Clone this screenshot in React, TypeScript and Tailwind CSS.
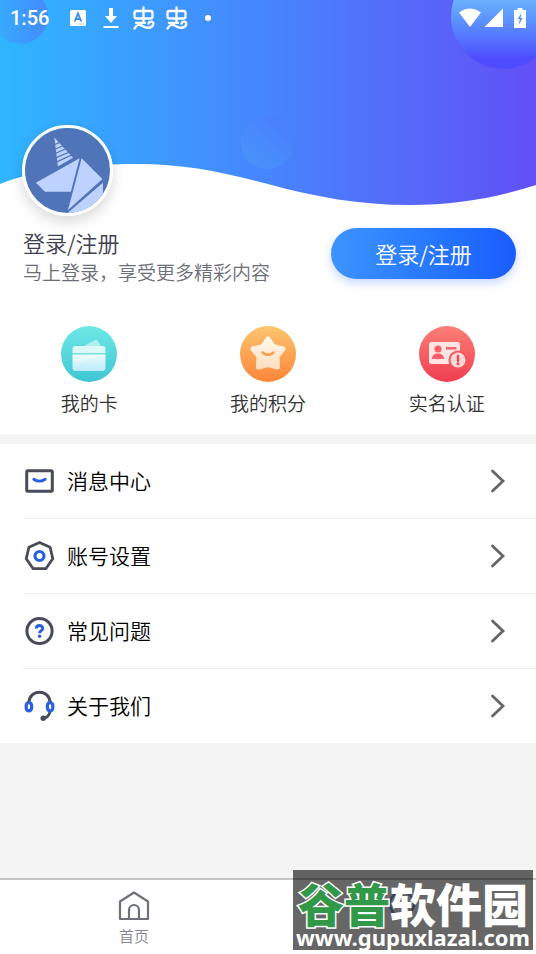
import type { ReactNode } from "react";

type Item = { label: string; icon: ReactNode };

const shortcuts: Item[] = [
  { label: "我的卡", icon: <CardIcon /> },
  { label: "我的积分", icon: <StarIcon /> },
  { label: "实名认证", icon: <IdentityIcon /> },
];

const menu: Item[] = [
  { label: "消息中心", icon: <MessageIcon /> },
  { label: "账号设置", icon: <SettingsIcon /> },
  { label: "常见问题", icon: <HelpIcon /> },
  { label: "关于我们", icon: <HeadsetIcon /> },
];

function CardIcon() {
  return (
    <svg className="w-14 h-14" viewBox="0 0 56 56" aria-hidden="true">
      <defs>
        <linearGradient id="cardBg" x1="0" y1="0" x2="0" y2="1">
          <stop offset="0" stopColor="#6fe8e5" />
          <stop offset="1" stopColor="#3fc6d4" />
        </linearGradient>
        <linearGradient id="cardFace" x1="0" y1="0" x2="0" y2="1">
          <stop offset="0" stopColor="#e6fcfa" />
          <stop offset="1" stopColor="#bdebfc" />
        </linearGradient>
      </defs>
      <circle cx="28" cy="28" r="28" fill="url(#cardBg)" />
      <path d="M23 20 34.5 13.8q1-.5 1.700.4L40 20Z" fill="#aef0ee" />
      <path d="M14.500 20h27a3 3 0 0 1 3 3v4.200h-33V23a3 3 0 0 1 3-3Z" fill="#dcf9f7" />
      <path d="M11.500 28.500h33V42a3 3 0 0 1-3 3h-27a3 3 0 0 1-3-3Z" fill="url(#cardFace)" />
      <path d="M11.500 36c10 1 20-6 33-6v-1.500h-33Z" fill="#fff" opacity=".3" />
    </svg>
  );
}

function StarIcon() {
  return (
    <svg className="w-14 h-14" viewBox="0 0 56 56" aria-hidden="true">
      <defs>
        <linearGradient id="starBg" x1="0" y1="0" x2="0" y2="1">
          <stop offset="0" stopColor="#fdc56f" />
          <stop offset="1" stopColor="#fb8539" />
        </linearGradient>
        <linearGradient id="starFace" x1="0" y1="0" x2="0" y2="1">
          <stop offset="0" stopColor="#fff8ec" />
          <stop offset="1" stopColor="#ffdfc0" />
        </linearGradient>
      </defs>
      <circle cx="28" cy="28" r="28" fill="url(#starBg)" />
      <path
        d="M28 13 33 20.500 43 23 37 30.500 37.500 41 28 38.500 18.500 41 19 30.500 13 23 23 20.500Z"
        fill="url(#starFace)"
        stroke="url(#starFace)"
        strokeWidth="5"
        strokeLinejoin="round"
      />
      <path d="M22.500 26.500q5.500 4.500 11 0" fill="none" stroke="#fb9a45" strokeWidth="2.500" strokeLinecap="round" />
    </svg>
  );
}

function IdentityIcon() {
  return (
    <svg className="w-14 h-14" viewBox="0 0 56 56" aria-hidden="true">
      <defs>
        <linearGradient id="idBg" x1="0" y1="0" x2="0" y2="1">
          <stop offset="0" stopColor="#fb7f76" />
          <stop offset="1" stopColor="#f03e50" />
        </linearGradient>
      </defs>
      <circle cx="28" cy="28" r="28" fill="url(#idBg)" />
      <rect x="10" y="16" width="31" height="22" rx="2.500" fill="#ffe6e3" />
      <circle cx="19" cy="23" r="3.600" fill="#f7606a" />
      <path d="M13 33c0-4 2.600-5.500 6-5.500s6 1.500 6 5.500Z" fill="#f7606a" />
      <path d="M27 22.300h10.500" stroke="#f7606a" strokeWidth="2.500" />
      <circle cx="39" cy="34" r="9.500" fill="#f55660" />
      <circle cx="39" cy="34" r="7.500" fill="#ffd9d6" />
      <path d="M39 30v5" stroke="#f24a58" strokeWidth="2.500" strokeLinecap="round" />
      <circle cx="39" cy="38" r="1.400" fill="#f24a58" />
    </svg>
  );
}

function MessageIcon() {
  return (
    <svg className="w-8 h-8" viewBox="0 0 32 32" fill="none" aria-hidden="true">
      <rect x="3.700" y="5.700" width="25.600" height="20.600" rx="1" stroke="#484c5a" strokeWidth="3" />
      <path d="M10.800 14.200q5.700 3.800 11.400 0" stroke="#2860e0" strokeWidth="2.900" strokeLinecap="round" />
    </svg>
  );
}

function SettingsIcon() {
  return (
    <svg className="w-8 h-8" viewBox="0 0 32 32" fill="none" aria-hidden="true">
      <path
        d="M16.500 2.500 27.100 7.300 29.800 18.800 22.800 28.700H10.200L3.200 18.800 5.900 7.300Z"
        stroke="#484c5a"
        strokeWidth="2.800"
        strokeLinejoin="round"
      />
      <circle cx="16.500" cy="16" r="4.500" stroke="#2860e0" strokeWidth="3.200" />
    </svg>
  );
}

function HelpIcon() {
  return (
    <svg className="w-8 h-8" viewBox="0 0 32 32" fill="none" aria-hidden="true">
      <circle cx="16.500" cy="16" r="12.600" stroke="#484c5a" strokeWidth="3" />
      <path
        d="M13.300 13.600c0-4 6.400-4 6.400-.2 0 2.300-3.100 2.300-3.100 4.800"
        stroke="#2860e0"
        strokeWidth="3"
      />
      <circle cx="16.600" cy="21.300" r="1.700" fill="#2860e0" />
    </svg>
  );
}

function HeadsetIcon() {
  return (
    <svg className="w-8 h-8" viewBox="0 0 32 32" fill="none" aria-hidden="true">
      <path d="M5.800 13C6.300-1.500 26.700-1.500 27.200 13" stroke="#484c5a" strokeWidth="3" />
      <path d="M27.200 21c-.8 4-3 6.500-6.500 7.500" stroke="#484c5a" strokeWidth="2.800" />
      <circle cx="20.200" cy="28.300" r="2.700" fill="#484c5a" />
      <rect x="3.200" y="12.600" width="5.400" height="8.200" rx="2.700" stroke="#2860e0" strokeWidth="3.200" />
      <rect x="24.400" y="12.600" width="5.400" height="8.200" rx="2.700" stroke="#2860e0" strokeWidth="3.200" />
    </svg>
  );
}

function Chevron() {
  return (
    <svg className="w-4 h-6" viewBox="0 0 16 24" fill="none" aria-hidden="true">
      <path d="m2.500 2 10.500 10L2.500 22" stroke="#666" strokeWidth="2.800" strokeLinecap="round" />
    </svg>
  );
}

function Unicorn() {
  return (
    <svg className="w-full h-full" viewBox="0 0 84 84" aria-hidden="true">
      <rect width="84" height="84" fill="#5074b8" />
      <g fill="#bed2ff">
        <path d="M29 9.500 47.500 29.500 32.500 38Z" />
        <path d="M54 30 45.300 63H19.700L10.700 54Z" />
        <path d="M56 30 76.500 50.500 42.500 81Z" />
        <path d="M77 54v13L68 84H42Z" />
      </g>
      <path
        d="m27 17.500 9-4M27 22l14-6M27 26.500l18-8M27 31l22-9.500M27 35.500l24-11"
        stroke="#5074b8"
        strokeWidth="1.200"
      />
    </svg>
  );
}

// notification glyph, shown twice in the status bar
function BugGlyph() {
  return (
    <svg className="w-6 h-6" viewBox="0 0 24 24" fill="none" stroke="#fff" strokeWidth="2.300" strokeLinecap="round" aria-hidden="true">
      <rect x="2.500" y="5" width="18" height="7.500" rx="2" />
      <path d="M11.500 1.500v15M4 16.800h9M2.500 22.500c2-4 5-4.500 8-2.500s9 3 10.500-1-4-4.500-4.500-1.300" />
    </svg>
  );
}

function StatusBar() {
  return (
    <div className="relative flex items-center justify-between h-9 px-[10px]">
      <div className="flex items-center">
        <span className="w-[60px] font-['Roboto',sans-serif] text-[20px] font-medium text-white">1:56</span>
        <svg className="w-4 h-4" viewBox="0 0 16 16" aria-hidden="true">
          <rect width="16" height="16" rx="1.500" fill="#fff" />
          <path d="m4.700 11.500 3.300-8 3.300 8M5.900 9h4.200" fill="none" stroke="#408fef" strokeWidth="1.900" />
          <path d="M8 14h6" stroke="#a8cdfa" strokeWidth="1" />
        </svg>
        <svg className="w-4 h-6 ml-[17px]" viewBox="0 0 16 24" fill="#fff" aria-hidden="true">
          <path d="M6 2h4v8h4l-6 7-6-7h4ZM.500 20h15v2H.500Z" />
        </svg>
        <span className="ml-[13px] flex gap-[9px]">
          <BugGlyph />
          <BugGlyph />
        </span>
        <span className="ml-4 w-[6px] h-[6px] rounded-full bg-white" />
      </div>
      <div className="flex items-center">
        <svg className="w-6 h-5" viewBox="0 0 24 20" fill="#fff" aria-hidden="true">
          <path d="M1 4.500Q12-3.500 23 4.500L12 19Z" />
        </svg>
        <svg className="w-5 h-5 ml-[2px]" viewBox="0 0 20 20" fill="#fff" aria-hidden="true">
          <path d="M19 .500V19H.500Z" />
        </svg>
        <svg className="w-3 h-5 ml-[10px]" viewBox="0 0 12 20" aria-hidden="true">
          <path d="M3.500 0h5v2H12v18H0V2h3.500Z" fill="#fff" />
          <path d="M7.500 5 3.500 11h2.300L4.700 17l4-7H6.500Z" fill="#5b94f5" />
        </svg>
      </div>
    </div>
  );
}

function Banner() {
  return (
    <header className="relative pb-1">
      <div className="absolute inset-x-0 top-0 h-[206px] overflow-hidden">
        <svg className="w-full h-full" viewBox="0 0 536 206" preserveAspectRatio="none" aria-hidden="true">
          <defs>
            <linearGradient id="sky" x1="0" y1="0" x2="1" y2="0">
              <stop offset="0" stopColor="#2fb6ff" />
              <stop offset=".5" stopColor="#4785fd" />
              <stop offset="1" stopColor="#6250f6" />
            </linearGradient>
          </defs>
          <path
            d="M0 0H536V185C495 198 455 205 410 205C360 205 315 197 268 184C222 172 185 164 137 164C88 164 38 169 0 184Z"
            fill="url(#sky)"
          />
        </svg>
        <div className="absolute -left-2 -top-3 w-14 h-14 rounded-full bg-linear-to-r from-[#34affe] to-[#4489fb]" />
        <div className="absolute -right-5 -top-9 w-[105px] h-[105px] rounded-full bg-linear-to-b from-[#70c0ff] from-25% to-[#4f4bff] to-90%" />
        <div className="absolute left-[45%] top-[116px] w-[53px] h-[53px] rounded-full bg-linear-to-tr from-[#4796fb] to-[#4a7bfc]" />
      </div>
      <StatusBar />
      <div className="relative ml-[22px] mt-[89px] w-[91px] h-[91px] rounded-full border-[3px] border-white overflow-hidden shadow-[0_6px_14px_rgba(0,0,0,0.15)]">
        <Unicorn />
      </div>
    </header>
  );
}

function Watermark() {
  return (
    <div className="absolute right-[3px] bottom-1 w-[240px] h-[80px] bg-black/60 text-white">
      <div className="flex justify-center pt-2 text-[46px] leading-[48px] font-black whitespace-nowrap">
        <span className="text-[#319848] [-webkit-text-stroke:3px_white] [paint-order:stroke_fill]">谷普</span>
        <span>软件园</span>
      </div>
      <div className="text-center font-['Noto_Sans',sans-serif] text-[22px] leading-[22px] font-bold whitespace-nowrap">
        www.gupuxlazal.com
      </div>
    </div>
  );
}

function TabBar() {
  return (
    <footer className="relative mt-auto">
      <nav className="grid grid-cols-2 h-[76px] border-t-2 border-[#c4c4c4] bg-white text-[15px] leading-5">
        <a href="#home" className="flex flex-col items-center pt-[10px] gap-1 text-[#85878c]">
          <svg className="w-8 h-8" viewBox="0 0 32 32" fill="none" stroke="#6e7179" strokeWidth="2.200" strokeLinejoin="round" aria-hidden="true">
            <path d="M2 11.500 16 2.500 30 11.500V29H2Z" />
            <path d="M11 29V20a5 5 0 0 1 10 0v9" />
          </svg>
          首页
        </a>
        <a href="#mine" aria-label="我的" className="flex flex-col items-center pt-[10px]">
          <svg className="w-8 h-8" viewBox="0 0 32 32" fill="none" stroke="#7d9ce8" strokeWidth="2.200" aria-hidden="true">
            <circle cx="16" cy="14" r="12" />
          </svg>
        </a>
      </nav>
      <Watermark />
    </footer>
  );
}

export default function App() {
  return (
    <div className="min-h-screen flex flex-col bg-[#f4f4f4] font-['Noto_Sans_CJK_SC',sans-serif] text-[#333] font-[350]">
      <div className="bg-white">
        <Banner />

        {/* Login prompt */}
        <section className="flex items-start justify-between pl-[23px] pr-5 pt-1">
          <div>
            <h1 className="text-[22px] leading-9 text-[#3e414d]">登录/注册</h1>
            <p className="text-[19px] leading-6 text-[#6c6e75]">马上登录，享受更多精彩内容</p>
          </div>
          <button className="mt-1 w-[185px] h-[51px] rounded-full bg-linear-to-r from-[#3d94ff] to-[#1a5cff] text-[22px] text-white shadow-[0_4px_10px_rgba(40,96,255,0.25)]">
            登录/注册
          </button>
        </section>

        {/* Shortcuts */}
        <section className="grid grid-cols-3 pt-[42px] pb-[18px]">
          {shortcuts.map((item) => (
            <a key={item.label} href="#shortcut" className="flex flex-col items-center gap-2 text-[19px] leading-[26px]">
              {item.icon}
              {item.label}
            </a>
          ))}
        </section>
      </div>

      <ul className="mt-[10px] bg-white">
        {menu.map((item, i) => (
          <li key={item.label} className="pl-[23px]">
            {i > 0 && <hr className="border-[#ececec]" />}
            <a href="#menu" className="flex items-center h-[74px] pr-[30px] text-[21px] text-black">
              {item.icon}
              <span className="flex-1 pl-3">{item.label}</span>
              <Chevron />
            </a>
          </li>
        ))}
      </ul>

      <TabBar />
    </div>
  );
}
